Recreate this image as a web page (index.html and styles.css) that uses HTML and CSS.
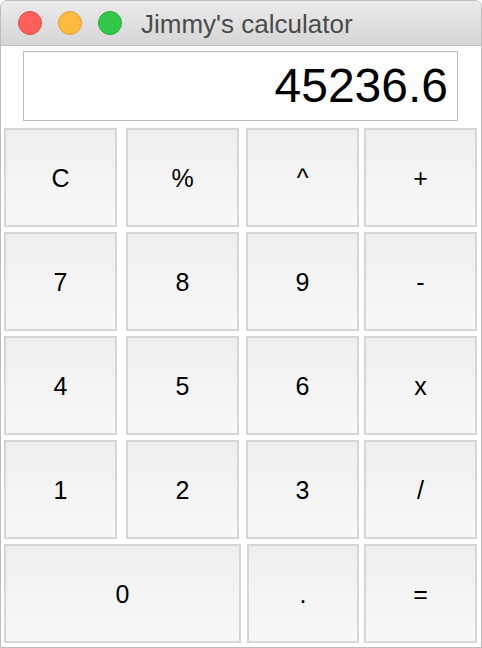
FILE: index.html
```html
<!DOCTYPE html>
<html>
<head>
<meta charset="utf-8">
<link rel="stylesheet" href="styles.css">
</head>
<body>
<div class="window">
  <div class="titlebar">
    <div class="lights">
      <span class="light red"></span>
      <span class="light yellow"></span>
      <span class="light green"></span>
    </div>
    <div class="title">Jimmy's calculator</div>
  </div>
  <div class="content">
    <div class="display">45236.6</div>
    <div class="keys">
      <button class="key">C</button>
      <button class="key">%</button>
      <button class="key">^</button>
      <button class="key">+</button>
      <button class="key">7</button>
      <button class="key">8</button>
      <button class="key">9</button>
      <button class="key">-</button>
      <button class="key">4</button>
      <button class="key">5</button>
      <button class="key">6</button>
      <button class="key">x</button>
      <button class="key">1</button>
      <button class="key">2</button>
      <button class="key">3</button>
      <button class="key">/</button>
      <button class="key wide">0</button>
      <button class="key dot">.</button>
      <button class="key">=</button>
    </div>
  </div>
</div>
</body>
</html>
```

FILE: styles.css
```css
html, body {
  margin: 0;
  padding: 0;
  background: #ffffff;
}
body {
  width: 482px;
  height: 648px;
  overflow: hidden;
  font-family: "Liberation Sans", Arial, sans-serif;
}
.window {
  box-sizing: border-box;
  width: 482px;
  height: 648px;
  border: 1px solid #bdbdbd;
  border-radius: 7px 7px 0 0;
  overflow: hidden;
  background: #ffffff;
  display: flex;
  flex-direction: column;
}
.titlebar {
  box-sizing: border-box;
  height: 45px;
  flex: none;
  display: flex;
  align-items: center;
  background: linear-gradient(#ebebeb, #d5d5d5);
  border-bottom: 1px solid #c2c2c2;
}
.lights {
  display: flex;
  gap: 16px;
  padding-left: 17px;
}
.light {
  box-sizing: border-box;
  width: 24px;
  height: 24px;
  border-radius: 50%;
  display: block;
}
.red { background: #fc605c; border: 1px solid #de4a46; }
.yellow { background: #fdbc40; border: 1px solid #de9f34; }
.green { background: #34c84a; border: 1px solid #27aa35; }
.title {
  margin-left: 19px;
  font-size: 26px;
  color: #4b4b4b;
  line-height: 1;
  margin-top: 1px;
}
.content {
  flex: 1;
  display: flex;
  flex-direction: column;
}
.display {
  box-sizing: border-box;
  margin: 5px 0 0 22px;
  width: 435px;
  height: 70px;
  border: 1px solid #bdbdbd;
  background: #ffffff;
  text-align: right;
  padding-right: 9px;
  font-size: 48px;
  line-height: 68px;
  color: #000000;
}
.keys {
  margin-top: 7px;
  padding-left: 3px;
  display: grid;
  grid-template-columns: 122px 120px 118px 114px;
  grid-auto-rows: 99px;
  row-gap: 5px;
}
.key {
  box-sizing: border-box;
  width: 113px;
  border: 2px solid #d6d6d6;
  background: linear-gradient(#efefef, #f8f8f8);
  font-family: "Liberation Sans", Arial, sans-serif;
  font-size: 25px;
  color: #000000;
  padding: 0;
  margin: 0;
  padding-top: 2px;
  display: flex;
  align-items: center;
  justify-content: center;
}
.wide {
  grid-column: span 2;
  width: 237px;
}
.dot {
  margin-left: 1px;
  width: 112px;
}
```
